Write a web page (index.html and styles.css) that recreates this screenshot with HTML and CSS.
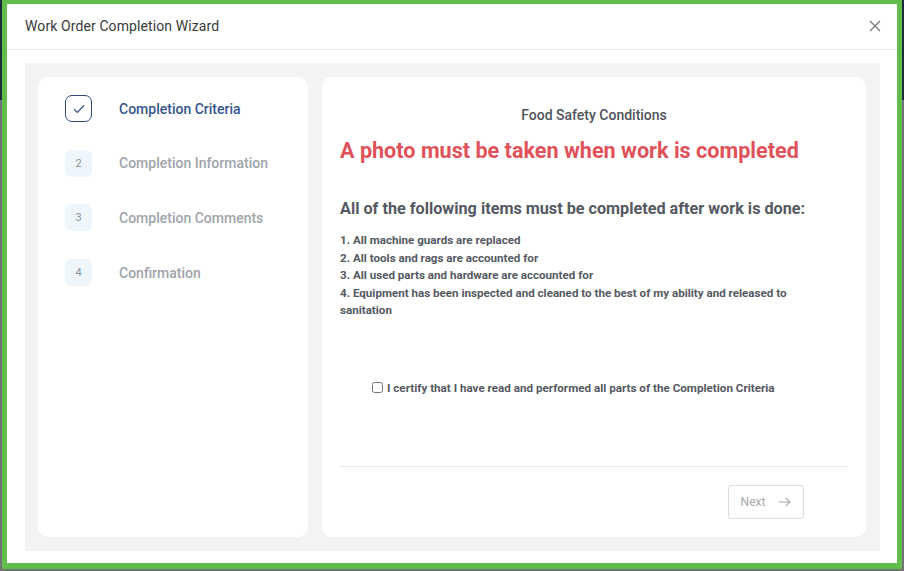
FILE: index.html
```html
<!DOCTYPE html>
<html>
<head>
<meta charset="utf-8">
<link rel="stylesheet" href="styles.css">
</head>
<body>
<div class="frame">
  <div class="modal">
    <div class="modal-header">
      <span class="modal-title">Work Order Completion Wizard</span>
      <svg class="close" width="12" height="12" viewBox="0 0 12 12"><path d="M1 1L11 11M11 1L1 11" stroke="#7a7a7a" stroke-width="1.4" fill="none"/></svg>
    </div>
    <div class="modal-body">
      <div class="panel">
        <div class="steps">
          <div class="step active">
            <span class="step-box"><svg width="12" height="10" viewBox="0 0 12 10"><path d="M1 5.2L4.3 8.5L11 1.5" stroke="#2d4a78" stroke-width="1.1" fill="none"/></svg></span>
            <span class="step-label">Completion Criteria</span>
          </div>
          <div class="step">
            <span class="step-box num">2</span>
            <span class="step-label">Completion Information</span>
          </div>
          <div class="step">
            <span class="step-box num">3</span>
            <span class="step-label">Completion Comments</span>
          </div>
          <div class="step">
            <span class="step-box num">4</span>
            <span class="step-label">Confirmation</span>
          </div>
        </div>
        <div class="content">
          <div class="content-main">
            <div class="sub-title">Food Safety Conditions</div>
            <div class="warn">A photo must be taken when work is completed</div>
            <div class="lead">All of the following items must be completed after work is done:</div>
            <div class="items">
              <div>1. All machine guards are replaced</div>
              <div>2. All tools and rags are accounted for</div>
              <div>3. All used parts and hardware are accounted for</div>
              <div>4. Equipment has been inspected and cleaned to the best of my ability and released to sanitation</div>
            </div>
            <label class="certify"><input type="checkbox" class="cb"><span>I certify that I have read and performed all parts of the Completion Criteria</span></label>
          </div>
          <div class="footer">
            <button class="next">Next <svg width="13" height="10" viewBox="0 0 13 10"><path d="M0.5 5H12M7.5 0.8L12 5L7.5 9.2" stroke="#a8a8a8" stroke-width="1.1" fill="none"/></svg></button>
          </div>
        </div>
      </div>
    </div>
  </div>
</div>
</body>
</html>
```

FILE: styles.css
```css
* { box-sizing: border-box; }
html, body { margin: 0; padding: 0; }
body {
  width: 904px;
  height: 571px;
  overflow: hidden;
  background: linear-gradient(to bottom, #1d2b3e 0, #1d2b3e 100px, #6f7377 100px, #6f7377 100%);
  font-family: Roboto, "Liberation Sans", sans-serif;
}
.frame {
  margin: 0 2px;
  width: 900px;
  height: 569px;
  border-style: solid;
  border-color: #62be4c;
  border-width: 4px 5px 6px 5px;
  background: #fff;
}
.modal {
  height: 100%;
  display: flex;
  flex-direction: column;
  background: #fff;
}
.modal-header {
  height: 46px;
  flex: none;
  display: flex;
  align-items: center;
  justify-content: space-between;
  padding: 0 16px 2px 18px;
  border-bottom: 1px solid #ebebeb;
}
.modal-title {
  font-size: 14px;
  color: #3a3a3a;
  letter-spacing: 0.1px;
}
.close { display: block; }
.modal-body {
  flex: 1;
  padding: 13px 17px 12px 18px;
  display: flex;
}
.panel {
  flex: 1;
  background: #f3f3f3;
  padding: 14px 14px 14px 13px;
  display: flex;
  gap: 14px;
}
.steps {
  width: 270px;
  flex: none;
  background: #fff;
  border-radius: 10px;
  padding: 18px 20px 0 27px;
  display: flex;
  flex-direction: column;
  gap: 27.7px;
}
.step {
  display: flex;
  align-items: center;
  gap: 27px;
  height: 27px;
}
.step-box {
  width: 27px;
  height: 27px;
  border-radius: 6px;
  display: flex;
  align-items: center;
  justify-content: center;
  flex: none;
}
.step.active .step-box {
  border: 1px solid #2d4a78;
  border-radius: 7px;
}
.step-box.num {
  background: #eef6fb;
  color: #8a929c;
  font-size: 11px;
}
.step-label {
  font-size: 14px;
  font-weight: 500;
  color: #a0a4ab;
}
.step.active .step-label { color: #34558b; }
.content {
  flex: 1;
  background: #fff;
  border-radius: 10px;
  padding: 0 18px 18px 18px;
  display: flex;
  flex-direction: column;
}
.content-main { flex: 1; }
.sub-title {
  margin-top: 28px;
  text-align: center;
  font-size: 14px;
  font-weight: 500;
  line-height: 20px;
  color: #50545c;
}
.warn {
  margin-top: 12px;
  font-size: 21.6px;
  font-weight: 700;
  line-height: 28px;
  color: #e0525a;
}
.lead {
  margin-top: 33px;
  font-size: 16.2px;
  font-weight: 700;
  line-height: 22px;
  color: #555962;
}
.items {
  margin-top: 12px;
  padding-right: 30px;
  font-size: 11.6px;
  font-weight: 700;
  line-height: 17.5px;
  color: #555962;
}
.certify {
  margin-top: 60px;
  padding-left: 32px;
  display: flex;
  align-items: center;
  gap: 4px;
  font-size: 11.65px;
  font-weight: 700;
  line-height: 16px;
  color: #555962;
}
.cb {
  width: 11px;
  height: 11px;
  margin: 0;
}
.footer {
  border-top: 1px solid #ebebeb;
  padding: 18px 44px 0 0;
  display: flex;
  justify-content: flex-end;
}
.next {
  width: 76px;
  height: 34px;
  border: 1px solid #dcdcdc;
  border-radius: 3px;
  background: #fff;
  font-family: Roboto, "Liberation Sans", sans-serif;
  font-size: 12px;
  color: #a8a8a8;
  display: flex;
  align-items: center;
  justify-content: center;
  gap: 13px;
  padding: 0;
}
```
